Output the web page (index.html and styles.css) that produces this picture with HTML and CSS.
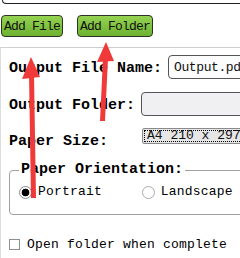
FILE: index.html
```html
<!DOCTYPE html>
<html lang="en">
<head>
    <meta charset="UTF-8">
    <meta name="viewport" content="width=device-width, initial-scale=1.0">
    <title>PDF Converter</title>
    <link rel="stylesheet" href="styles.css">
</head>
<body>
    <div class="file-list"></div>

    <div class="actions">
        <button class="green-button">Add File</button>
        <button class="green-button">Add Folder</button>
    </div>

    <div class="panel">
        <div class="form-row">
            <label for="outputName">Output File Name:</label>
            <input type="text" id="outputName" class="text-input name-input" value="Output.pdf">
        </div>
        <div class="form-row folder-row">
            <label for="outputFolder">Output Folder:</label>
            <input type="text" id="outputFolder" class="text-input folder-input">
        </div>
        <div class="form-row size-row">
            <label for="paperSize" class="size-label">Paper Size:</label>
            <select id="paperSize" class="size-select">
                <option>A4 210 x 297 mm</option>
                <option>A3 297 x 420 mm</option>
                <option>Letter 216 x 279 mm</option>
            </select>
        </div>

        <fieldset class="orientation">
            <legend>Paper Orientation:</legend>
            <label class="option"><input type="radio" name="orientation" checked>Portrait</label>
            <label class="option landscape"><input type="radio" name="orientation">Landscape</label>
        </fieldset>

        <label class="option open-folder"><input type="checkbox">Open folder when complete</label>
    </div>

    <!-- annotation arrows drawn over the form -->
    <svg class="arrows" width="240" height="258" viewBox="0 0 240 258">
        <line x1="31.5" y1="74" x2="33.5" y2="198" stroke="#f03a3a" stroke-width="5"/>
        <polygon points="31,57 22,79 40,77" fill="#f03a3a"/>
        <line x1="105.5" y1="58" x2="102.5" y2="121" stroke="#f03a3a" stroke-width="5"/>
        <polygon points="106,42 97,62 114,61" fill="#f03a3a"/>
    </svg>
</body>
</html>
```

FILE: styles.css
```css
html, body {
    overflow: hidden;
}
body {
    margin: 0;
    width: 240px;
    height: 258px;
    position: relative;
    background-color: white;
    font-family: "Liberation Mono", "DejaVu Sans Mono", monospace;
    color: #000;
}
.file-list {
    width: 300px;
    height: 3px;
    margin-left: 2px;
    border: 1px solid #222;
    border-top: none;
    border-bottom-left-radius: 4px;
}
.actions {
    display: flex;
    gap: 14px;
    margin-top: 11px;
    padding-left: 1px;
}
.green-button {
    height: 22px;
    padding: 0 2px;
    background: linear-gradient(#95d352, #6cb230);
    border: 1px solid #2b3324;
    border-radius: 4px;
    font-family: inherit;
    font-size: 13px;
    letter-spacing: -0.8px;
    color: #111;
    white-space: nowrap;
    cursor: pointer;
}
.panel {
    width: 320px;
    height: 230px;
    margin-top: 10px;
    padding: 7px 0 0 8px;
    border-top: 1px solid #cfcfcf;
    border-left: 1px solid #dcdcdc;
}
.form-row {
    display: flex;
    align-items: center;
    gap: 6px;
}
.form-row label {
    flex: none;
    padding-top: 4px;
    font-size: 15px;
    font-weight: bold;
    line-height: 16px;
    white-space: nowrap;
}
.folder-row {
    margin-top: 13px;
}
.size-row {
    margin-top: 12px;
    align-items: flex-start;
    gap: 0;
}
.size-label {
    width: 133px;
    margin-top: 2px;
}
.text-input {
    flex: none;
    width: 200px;
    height: 24px;
    box-sizing: border-box;
    padding: 0 5px;
    border: 1px solid #555;
    border-radius: 4px;
    font-family: inherit;
    font-size: 13px;
    letter-spacing: -0.4px;
    color: #111;
}
.name-input {
    background-color: #fcfcfc;
}
.folder-input {
    background-color: #f0f0f3;
}
.size-select {
    flex: none;
    appearance: none;
    width: 130px;
    height: 16px;
    padding: 0 4px;
    border: 1px solid #8a8a8a;
    border-radius: 2px;
    outline: 1px dotted #000;
    outline-offset: -3px;
    background-color: #e6e6e6;
    font-family: inherit;
    font-size: 13px;
    line-height: 14px;
    color: #111;
}
.orientation {
    width: 300px;
    margin: 12px 0 0 0;
    padding: 6px 0 10px 9px;
    border: 1px solid #a0a0a0;
    border-radius: 4px;
    white-space: nowrap;
}
.orientation legend {
    padding: 0 2px;
    font-size: 15px;
    font-weight: bold;
    line-height: 16px;
}
.option {
    display: inline-flex;
    align-items: center;
    gap: 6px;
    font-size: 13px;
    letter-spacing: 0.2px;
    line-height: 16px;
    white-space: nowrap;
}
.landscape {
    margin-left: 30px;
}
.option input[type="radio"] {
    appearance: none;
    width: 13px;
    height: 13px;
    margin: 0;
    border: 1px solid #8a8a8a;
    border-radius: 50%;
    background-color: white;
}
.landscape input[type="radio"] {
    border-color: #ababab;
}
.option input[type="radio"]:checked {
    background: radial-gradient(circle, #000 0 3.5px, #fff 4.2px);
}
.open-folder {
    display: flex;
    gap: 7px;
    margin-top: 22px;
}
.open-folder input[type="checkbox"] {
    appearance: none;
    width: 11px;
    height: 11px;
    margin: 0;
    border: 1px solid #8f8f8f;
    background-color: white;
}
.arrows {
    position: absolute;
    top: 0;
    left: 0;
    pointer-events: none;
}
```
